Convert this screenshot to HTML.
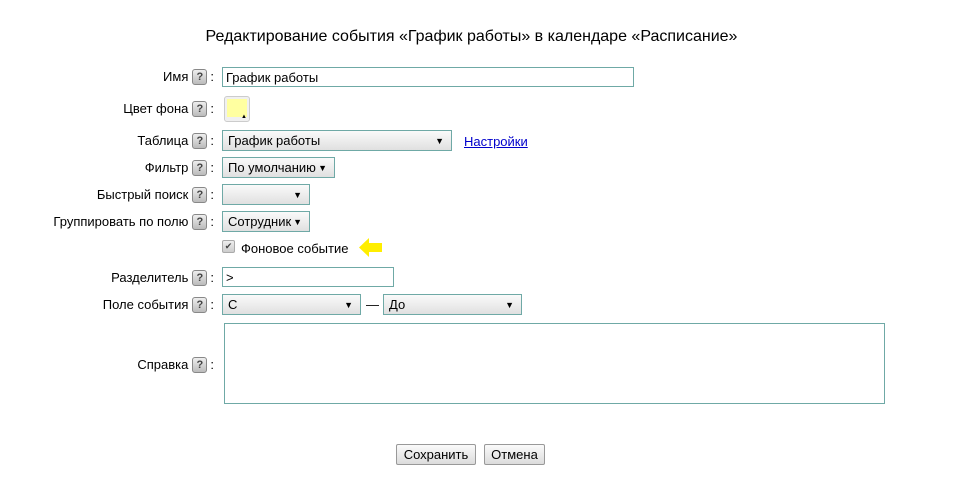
<!DOCTYPE html>
<html><head><meta charset="utf-8"><style>
body{margin:0;width:957px;height:494px;background:#fff;font-family:"Liberation Sans","DejaVu Sans",sans-serif;font-size:13px;color:#000;position:relative;overflow:hidden}
.a{position:absolute}
.lbl{position:absolute;right:743px;white-space:nowrap;line-height:16px;height:16px}
.h{display:inline-block;width:13px;height:14px;border:1px solid #888;border-radius:3px;background:linear-gradient(#eee,#bbb);font-size:11px;font-weight:bold;text-align:center;line-height:14px;color:#444;vertical-align:top;margin:0 3px 0 4px;box-sizing:content-box}
.box{position:absolute;border:1px solid #6fa9a6;box-sizing:border-box;background:#fff;line-height:19px;padding-left:3px}
.sel{background:linear-gradient(#fafafa,#e0e0e0);padding-left:5px}
.sel:after{content:"▼";position:absolute;right:7px;top:1px;font-size:9px;line-height:19px}
.btn{position:absolute;border:1px solid #999;border-radius:2px;background:linear-gradient(#fafafa,#dcdcdc);text-align:center;line-height:19px;box-sizing:border-box;height:21px}
</style></head><body>
<div class="a" style="left:0;width:943px;top:28px;text-align:center;font-size:16px">Редактирование события «График работы» в календаре «Расписание»</div>

<div class="lbl" style="top:69px">Имя<span class="h">?</span>:</div>
<div class="box" style="left:222px;top:67px;width:412px;height:20px">График работы</div>

<div class="lbl" style="top:101px">Цвет фона<span class="h">?</span>:</div>
<div class="a" style="left:224px;top:96px;width:26px;height:26px;border:1px solid #ccc;border-radius:3px;box-sizing:border-box;background:#f0f0f0"><div style="position:absolute;left:2px;top:2px;width:20px;height:18px;background:#ffffa0"></div><div style="position:absolute;right:2px;bottom:1px;font-size:6px;line-height:6px">▲</div></div>

<div class="lbl" style="top:133px">Таблица<span class="h">?</span>:</div>
<div class="box sel" style="left:222px;top:130px;width:230px;height:21px">График работы</div>
<div class="a" style="left:464px;top:134px;color:#00c;text-decoration:underline">Настройки</div>

<div class="lbl" style="top:160px">Фильтр<span class="h">?</span>:</div>
<div class="box sel" style="left:222px;top:157px;width:113px;height:21px">По умолчанию</div>

<div class="lbl" style="top:187px">Быстрый поиск<span class="h">?</span>:</div>
<div class="box sel" style="left:222px;top:184px;width:88px;height:21px"></div>

<div class="lbl" style="top:214px">Группировать по полю<span class="h">?</span>:</div>
<div class="box sel" style="left:222px;top:211px;width:88px;height:21px">Сотрудник</div>

<div class="a" style="left:222px;top:240px;width:11px;height:11px;border:1px solid #aaa;border-radius:2px;background:linear-gradient(#eee,#ccc);font-size:9px;line-height:11px;text-align:center;color:#444">✔</div>
<div class="a" style="left:241px;top:241px">Фоновое событие</div>
<svg class="a" style="left:359px;top:237px" width="24" height="21" viewBox="0 0 24 21"><path d="M0 10.5 L10 1 L10 6 L23 6 L23 15 L10 15 L10 20 Z" fill="#ffee00"/></svg>

<div class="lbl" style="top:270px">Разделитель<span class="h">?</span>:</div>
<div class="box" style="left:222px;top:267px;width:172px;height:20px">&gt;</div>

<div class="lbl" style="top:297px">Поле события<span class="h">?</span>:</div>
<div class="box sel" style="left:222px;top:294px;width:139px;height:21px">С</div>
<div class="a" style="left:366px;top:297px">—</div>
<div class="box sel" style="left:383px;top:294px;width:139px;height:21px">До</div>

<div class="lbl" style="top:357px">Справка<span class="h">?</span>:</div>
<div class="box" style="left:224px;top:323px;width:661px;height:81px"></div>

<div class="btn" style="left:396px;top:444px;width:80px">Сохранить</div>
<div class="btn" style="left:484px;top:444px;width:61px">Отмена</div>
</body></html>
